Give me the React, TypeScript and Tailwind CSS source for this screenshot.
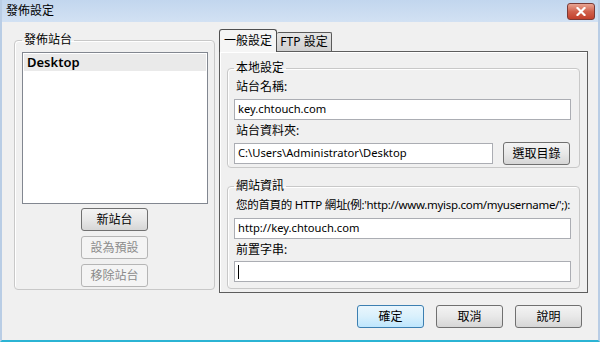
import React from "react";

const FONT = "font-['Noto_Sans','Noto_Sans_CJK_TC',sans-serif]";
const BTN =
  "flex h-[23px] w-[67px] items-center justify-center rounded-[3px] border text-[12px] leading-none";
const BTN_ON = `${BTN} border-[#707070] bg-gradient-to-b from-[#f3f3f3] via-[#e8e8e8] to-[#d6d6d6] text-black`;
const BTN_OFF = `${BTN} border-[#b5b5b5] bg-[#f4f4f4] text-[#8b8b8b]`;
const FIELD =
  "flex h-[21px] items-center border border-[#abadb3] bg-white px-[3px] text-[11.2px] text-black whitespace-nowrap";
const LEGEND = "px-[2px] text-[12px] leading-[16px] text-black";
const GROUP = "min-w-0 shrink-0 rounded-[4px] border border-[#c8c8c8] shadow-[inset_1px_1px_0_#ffffff]";

const TitleBar = () => (
  <div className="flex h-[22px] items-center justify-between bg-gradient-to-b from-[#c2d6ee] to-[#d2e1f3] pl-[4px] pr-[3px]">
    <span className="text-[12px] text-black">發佈設定</span>
    <div className="flex h-[17px] w-[28px] items-center justify-center rounded-[3px] border border-[#7a3a36] bg-gradient-to-b from-[#e8a493] via-[#d0614d] to-[#c23f2b]">
      <svg className="h-[9px] w-[10px]" viewBox="0 0 10 9">
        <path d="M1.5 1 L8.5 8 M8.5 1 L1.5 8" stroke="#ffffff" strokeWidth={2.2} strokeLinecap="square" />
      </svg>
    </div>
  </div>
);

const SitePanel = () => (
  <fieldset className={`${GROUP} ml-[12px] mt-[10px] flex h-[258px] w-[201px] flex-col px-[7px]`}>
    <legend className={LEGEND}>發佈站台</legend>
    <div className="mt-[4px] h-[152px] w-[186px] border border-[#828790] bg-white p-px">
      <div className="flex h-[17px] items-center bg-[#eaeaea] pl-[3px] text-[13px] font-semibold text-black">Desktop</div>
    </div>
    <div className="mt-[4px] flex flex-col items-center gap-[5px]">
      <div className={BTN_ON}>新站台</div>
      <div className={BTN_OFF}>設為預設</div>
      <div className={BTN_OFF}>移除站台</div>
    </div>
  </fieldset>
);

const Label = ({ children }: { children: React.ReactNode }) => (
  <div className="h-[16px] whitespace-nowrap pl-[2px] text-[12px] leading-[16px] text-black">{children}</div>
);

const SettingsTab = () => (
  <div className="ml-[4px] mt-[7px] flex flex-col">
    <div className="flex items-end">
      <div className="relative z-10 -mb-px flex h-[23px] w-[58px] items-center justify-center rounded-t-[3px] border border-b-0 border-[#4f4f4f] bg-[#f5f5f5] text-[12px] text-black">
        一般設定
      </div>
      <div className="flex h-[19px] w-[55px] items-center justify-center rounded-t-[2px] border border-b-0 border-l-0 border-[#5a5a5a] bg-gradient-to-b from-[#e6e6e6] to-[#cfcfcf] text-[12px] text-black">
        FTP 設定
      </div>
    </div>
    <div className="flex h-[242px] w-[369px] flex-col gap-[10px] border border-[#5d5d5d] px-[7px] pt-[8px] shadow-[inset_1px_1px_0_#ffffff]">
      <fieldset className={`${GROUP} flex h-[108px] flex-col pl-[6px] pr-[8px]`}>
        <legend className={LEGEND}>本地設定</legend>
        <div className="mt-[3px]">
          <Label>站台名稱:</Label>
        </div>
        <div className={`${FIELD} mt-[4px]`}>key.chtouch.com</div>
        <div className="mt-[3px]">
          <Label>站台資料夾:</Label>
        </div>
        <div className="mt-[3px] flex items-center gap-[10px]">
          <div className={`${FIELD} w-[259px]`}>C:\Users\Administrator\Desktop</div>
          <div className={BTN_ON}>選取目錄</div>
        </div>
      </fieldset>
      <fieldset className={`${GROUP} flex h-[111px] flex-col pl-[6px] pr-[8px]`}>
        <legend className={LEGEND}>網站資訊</legend>
        <div className="mt-[3px]">
          <div className="h-[16px] whitespace-nowrap pl-[2px] text-[11.5px] leading-[16px] tracking-[-0.3px] text-black">
            您的首頁的 HTTP 網址(例:'http://www.myisp.com/myusername/';):
          </div>
        </div>
        <div className={`${FIELD} mt-[5px]`}>http://key.chtouch.com</div>
        <div className="mt-[3px]">
          <Label>前置字串:</Label>
        </div>
        <div className={`${FIELD} mt-[3px]`}>
          <span className="h-[14px] w-px bg-black" />
        </div>
      </fieldset>
    </div>
  </div>
);

export default function App() {
  return (
    <div className={`${FONT} flex h-[342px] w-[600px] flex-col overflow-hidden border-x-2 border-b-2 border-x-[#b9cde5] border-b-[#2bb4d4] bg-[#f0f0f0]`}>
      <TitleBar />
      <div className="flex items-start">
        <SitePanel />
        <SettingsTab />
      </div>
      <div className="mt-[12px] flex justify-end gap-[12px] pr-[16px]">
        <div className={`${BTN} border-[#3c7fb1] bg-gradient-to-b from-[#eaf6fd] via-[#d9f0fc] to-[#bee6fd] text-black`}>確定</div>
        <div className={BTN_ON}>取消</div>
        <div className={BTN_ON}>說明</div>
      </div>
    </div>
  );
}
